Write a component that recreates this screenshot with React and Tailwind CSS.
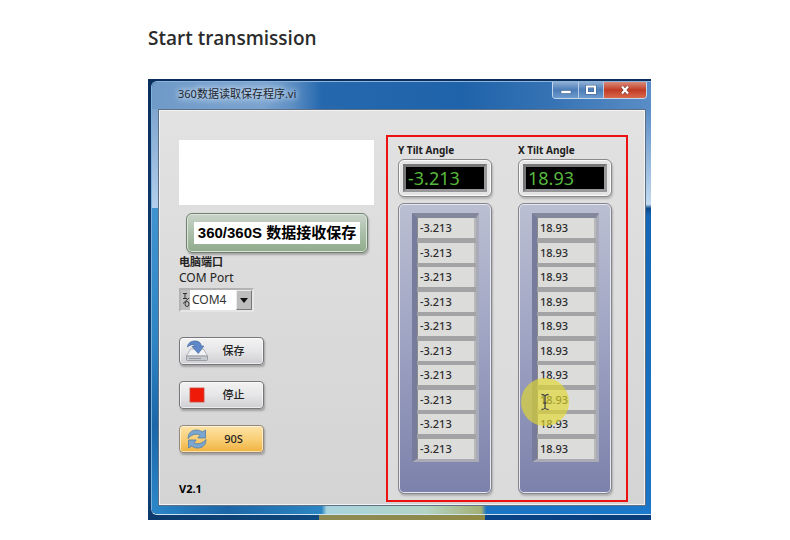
import { useState } from 'react';

const tiltChannels = [
  { id: 'y', label: 'Y Tilt Angle', current: '-3.213', values: Array(10).fill('-3.213') },
  { id: 'x', label: 'X Tilt Angle', current: '18.93', values: Array(10).fill('18.93') },
];

const ports = ['COM1', 'COM2', 'COM3', 'COM4'];

const SaveIcon = () => (
  <svg viewBox="0 0 22 22" className="w-[22px] h-[22px]" aria-hidden="true">
    <path d="M4.500 9h13l4 7H.5z" fill="#f1f2f4" stroke="#a4a8ae" strokeWidth=".8" />
    <path d="M.5 16h21v3.500q0 1-1 1h-19q-1 0-1-1z" fill="#c6cacf" stroke="#8d9299" strokeWidth=".8" />
    <path d="M3 18.500h12" stroke="#8f949b" strokeWidth=".9" />
    <path
      d="M1.500 7C2 3 5 1 9 1c4 0 6 2 6.200 5h2.600l-5.500 7.500L6 6.500h3C8.500 4.500 5 3.500 1.500 7z"
      fill="#5f88c8"
      stroke="#44669f"
      strokeWidth=".7"
    />
  </svg>
);

const RefreshIcon = () => (
  <svg viewBox="0 0 22 22" className="w-[22px] h-[22px]" aria-hidden="true">
    <g fill="#7ba6cf" stroke="#527fa9" strokeWidth=".8">
      <path d="M2 10.500C2 5 5.500 2 10.500 2c2.200 0 4.200.7 5.600 2L19.500 2v8h-7.700l2.200-2.700C13 6.500 12 6.200 10.500 6.200 7 6.200 5 7.500 2 10.500z" />
      <path d="M20 11.500c0 5.500-3.500 8.500-8.500 8.500-2.200 0-4.200-.7-5.600-2L2.500 20v-8h7.700L8 14.700c1 .8 2 1.100 3.500 1.100 3.500 0 5.500-1.300 8.500-4.300z" />
    </g>
  </svg>
);

const StopIcon = () => (
  <svg viewBox="0 0 22 22" className="w-[22px] h-[22px]" aria-hidden="true">
    <rect x="4" y="4" width="14" height="14" fill="#f01a08" stroke="#c84a3c" strokeWidth=".8" />
  </svg>
);

const IoGlyph = () => (
  <svg viewBox="0 0 8 16" className="w-2 h-4 shrink-0" fill="none" stroke="#333" aria-hidden="true">
    <path d="M1 1.500h4M3 1.500v5M1 6.500h4M7 6L1 11.500" strokeWidth="1" />
    <ellipse cx="5" cy="12" rx="2" ry="2.500" strokeWidth="1" />
  </svg>
);

const WindowControls = () => (
  <div className="flex h-[17px] w-[95px] rounded-b border border-t-0 border-[#c3d6ec] overflow-hidden">
    <button
      type="button"
      aria-label="Minimize"
      className="flex w-[26px] items-center justify-center border-r border-[#b8cde5] bg-linear-to-b from-[#8fafd4] via-[#4b7db8] to-[#6d9bcd]"
    >
      <svg viewBox="0 0 12 10" className="w-3 h-[10px]">
        <rect x="1" y="5.500" width="10" height="3" fill="#fff" stroke="#46668f" strokeWidth=".6" />
      </svg>
    </button>
    <button
      type="button"
      aria-label="Maximize"
      className="flex w-[25px] items-center justify-center border-r border-[#b8cde5] bg-linear-to-b from-[#8fafd4] via-[#4b7db8] to-[#6d9bcd]"
    >
      <svg viewBox="0 0 12 10" className="w-3 h-[10px]">
        <rect x="2" y="1.500" width="8" height="6.500" fill="none" stroke="#46668f" strokeWidth="3" />
        <rect x="2" y="1.500" width="8" height="6.500" fill="none" stroke="#fff" strokeWidth="2" />
      </svg>
    </button>
    <button
      type="button"
      aria-label="Close"
      className="flex flex-1 items-center justify-center bg-linear-to-b from-[#d98a7a] via-[#c03a22] to-[#d9694c]"
    >
      <svg viewBox="0 0 12 10" className="w-3 h-[10px]" fill="none">
        <path d="M3 1.500l6 7M9 1.500l-6 7" stroke="#6d3a34" strokeWidth="3.400" />
        <path d="M3 1.500l6 7M9 1.500l-6 7" stroke="#fff" strokeWidth="2.200" />
      </svg>
    </button>
  </div>
);

const PanelButton = ({ icon, children, active }) => (
  <button
    type="button"
    className={`flex h-7 w-[85px] items-center rounded border pl-[6px] text-[11px] font-medium text-[#222] shadow-[1px_2px_2px_rgba(0,0,0,0.25),inset_0_0_0_1px_rgba(255,255,255,0.6)] ${
      active
        ? 'border-[#96897a] bg-linear-to-b from-[#fce3a6] via-[#f9cf76] via-50% to-[#efb23c]'
        : 'border-[#77777b] bg-linear-to-b from-[#f3f3f3] via-[#e6e6e8] via-50% to-[#cfcfd3]'
    }`}
  >
    {icon}
    <span className="flex-1 pr-1 text-center">{children}</span>
  </button>
);

const TiltColumn = ({ channel, children }) => (
  <div className="relative flex w-[94px] flex-col">
    <label
      htmlFor={`${channel.id}-current`}
      className="mb-px whitespace-nowrap text-[10px] leading-4 font-bold text-[#1c1c1c]"
    >
      {channel.label}
    </label>
    <div className="h-[38px] rounded-md border border-[#8a8a8c] bg-[#e4e4e4] p-[4px] shadow-[1px_2px_2px_rgba(0,0,0,0.2),inset_0_0_0_1px_#fafafa]">
      <input
        id={`${channel.id}-current`}
        readOnly
        value={channel.current}
        className="block h-full w-full border-3 border-t-[#77777a] border-l-[#77777a] border-r-[#98989a] border-b-[#98989a] bg-black px-[2px] text-[18px] leading-5 text-[#56b83c] outline-none"
      />
    </div>
    <div className="mt-[6px] rounded-md border border-[#85858f] bg-linear-to-b from-[#bbbfd2] via-[#a0a5c4] via-45% to-[#7b81aa] pt-[9px] pr-3 pb-[31px] pl-[13px] shadow-[1px_2px_2px_rgba(0,0,0,0.2),inset_0_0_0_1px_#e8e8ee]">
      <div className="flex h-[249px] flex-col justify-between border-t-5 border-r-3 border-b-3 border-l-5 border-t-[#84889b] border-r-[#a9abb9] border-b-[#aaabb5] border-l-[#777c9c] bg-[#a3a3a5]">
        {channel.values.map((value, index) => (
          <input
            key={index}
            readOnly
            aria-label={`${channel.label} ${index + 1}`}
            value={value}
            className="block h-5 w-full border-r-2 border-l border-r-[#b9b9b9] border-l-[#8b8b8b] bg-[#dcdcdb] px-[2px] text-[11px] leading-5 font-medium text-[#2b2b2b] outline-none"
          />
        ))}
      </div>
    </div>
    {children}
  </div>
);

// Highlighted mouse position over the readings
const CursorHighlight = () => (
  <div className="pointer-events-none absolute top-[236px] left-[3px] flex size-12 items-center justify-center rounded-full bg-[#e2d92e]/65">
    <svg viewBox="0 0 10 18" className="w-[10px] h-[18px]" fill="none" stroke="#444" strokeWidth="1.300">
      <path d="M1.500 1.500Q4 1.500 5 3 6 1.500 8.500 1.500M5 3v12M1.500 16.500Q4 16.500 5 15 6 16.500 8.500 16.500M3.500 10h3" />
    </svg>
  </div>
);

const App = () => {
  const [port, setPort] = useState('COM4');

  return (
    <main className="min-h-screen bg-white pt-[24px] pr-[139px] pb-5 pl-[148px] font-['Noto_Sans','Noto_Sans_CJK_SC',sans-serif]">
      <h1 className="mb-[27px] font-['Open_Sans','Noto_Sans',sans-serif] text-[19px] leading-7 font-semibold text-[#2b2b2b]">
        Start transmission
      </h1>

      {/* Desktop behind the window */}
      <section className="bg-[linear-gradient(to_right,#0d3a6c_0%,#0e4a80_34%,#8d8a55_34%,#8f8a45_67%,#0a4488_67%,#0a3d7a_100%)]">
        <div className="bg-[linear-gradient(to_bottom,#0b2f5c,#0d4580_90%,transparent_98%)] pt-[2px] pb-[5px] pl-[3px]">
          <div className="overflow-hidden rounded-l-md border-t border-b border-l border-t-[#8fb4dc] border-b-[#cfe4ee] border-l-[#7fb2dd]">
            {/* Title bar */}
            <div className="flex h-[27px] items-start justify-between bg-[linear-gradient(to_right,#6f9ac8_0%,#7ba3cf_22%,#5e8fc4_28%,#2568ae_34%,#1f63aa_62%,#3673b4_80%,#5a8dc6_100%)] pr-[4px] pl-[26px]">
              <h2 className="whitespace-nowrap text-[11px] leading-6 text-[#1b2530] [text-shadow:0_0_5px_#c9dcf0,0_0_7px_#c9dcf0,0_0_10px_#b4cee8]">
                360数据读取保存程序.vi
              </h2>
              <WindowControls />
            </div>

            <div className="flex">
              <div className="w-[6px] bg-[linear-gradient(to_bottom,#7fa5cf_0%,#b3cfec_25%,#3f94d0_25%,#2e83c2_60%,#1b66a8_80%,#2a86c8_100%)]" />

              {/* Front panel */}
              <div className="grid min-w-0 flex-1 grid-cols-[195fr_242fr] gap-x-3 border border-[#5d6f85] bg-[linear-gradient(to_bottom,#e2e2e2_0%,#dcdcdc_40%,#d4d4d5_100%)] pt-[25px] pr-[17px] pb-[3px] pl-5 shadow-[inset_0_0_0_1px_#f3f3f3]">
                <div className="flex flex-col items-start pt-[5px]">
                  <textarea
                    readOnly
                    aria-label="Message"
                    className="block h-[65px] w-full resize-none bg-white outline-none"
                  />
                  <button
                    type="button"
                    className="mt-2 ml-[7px] h-10 w-[182px] rounded-md border border-[#70806f] bg-linear-to-b from-[#c9d3c9] to-[#8fab8a] px-[7px] py-2 shadow-[1px_2px_2px_rgba(0,0,0,0.25),inset_0_0_0_1px_#dde6dc]"
                  >
                    <span className="block bg-white text-center font-['Liberation_Sans','Noto_Sans_CJK_SC',sans-serif] text-[15px] leading-[22px] font-bold whitespace-nowrap text-black">
                      360/360S 数据接收保存
                    </span>
                  </button>
                  <label htmlFor="port" className="mt-px text-[11px] leading-4 text-[#222]">
                    <span className="block font-bold">电脑端口</span>
                    <span className="block text-[12px]">COM Port</span>
                  </label>
                  <div className="mt-[2px] flex h-6 w-[75px] items-center border-2 border-t-[#b3b3b3] border-r-[#e6e6e6] border-b-[#e6e6e6] border-l-[#b3b3b3] bg-[#c0c0c0] pl-px">
                    <IoGlyph />
                    <div className="relative h-full flex-1">
                      <select
                        id="port"
                        value={port}
                        onChange={(e) => setPort(e.target.value)}
                        className="block h-full w-full appearance-none bg-white pl-[2px] text-[12px] leading-5 text-[#333] outline-none"
                      >
                        {ports.map((name) => (
                          <option key={name} value={name}>
                            {name}
                          </option>
                        ))}
                      </select>
                      <span className="pointer-events-none absolute inset-y-0 right-0 flex w-4 items-center justify-center border border-t-[#ececec] border-r-[#777] border-b-[#777] border-l-[#ececec] bg-[#bdbdbd]">
                        <svg viewBox="0 0 8 5" className="w-2 h-[5px]">
                          <path d="M0 0h8L4 5z" fill="#111" />
                        </svg>
                      </span>
                    </div>
                  </div>

                  <div className="mt-[25px] flex flex-col gap-4">
                    <PanelButton icon={<SaveIcon />}>保存</PanelButton>
                    <PanelButton icon={<StopIcon />}>停止</PanelButton>
                    <PanelButton icon={<RefreshIcon />} active>
                      90S
                    </PanelButton>
                  </div>
                  <p className="mt-7 text-[11px] leading-4 font-bold text-black">V2.1</p>
                </div>

                {/* Tilt readings */}
                <div className="flex justify-between border-2 border-[#ee1111] bg-[#e0e0e0]/60 pt-[5px] pr-[14px] pb-[6px] pl-[10px]">
                  {tiltChannels.map((channel) => (
                    <TiltColumn key={channel.id} channel={channel}>
                      {channel.id === 'x' && <CursorHighlight />}
                    </TiltColumn>
                  ))}
                </div>
              </div>

              <div className="w-[5px] bg-[linear-gradient(to_bottom,#5a8dc6_0%,#c3daf0_24%,#0c4a8c_25%,#1566b6_27%,#1b74c4_100%)]" />
            </div>

            <div className="h-2 bg-[linear-gradient(to_right,#2a86c8_0%,#1b66a8_15%,#2c86c4_34%,#a9d4de_35%,#b3d3c4_55%,#a3b075_66%,#1b74c4_67%,#1b78ca_100%)]" />
          </div>
        </div>
      </section>
    </main>
  );
};

export default App;
